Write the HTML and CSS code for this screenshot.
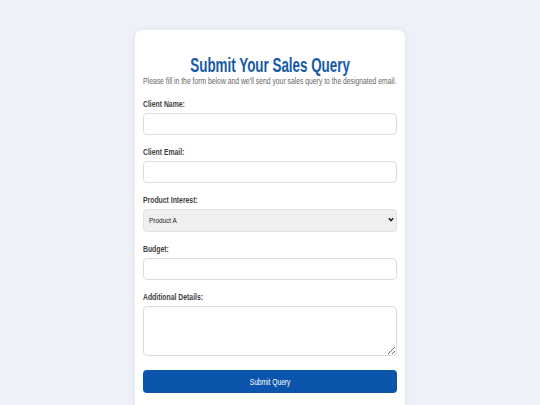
FILE: index.html
```html
<!DOCTYPE html>
<html>
<head>
<meta charset="utf-8">
<link rel="stylesheet" href="styles.css">
</head>
<body>
<div class="card">
  <h1 class="title"><span class="title-text">Submit Your Sales Query</span></h1>
  <p class="subtitle"><span class="subtitle-text">Please fill in the form below and we'll send your sales query to the designated email.</span></p>
  <form class="form">
    <label class="label" for="name"><span class="label-text">Client Name:</span></label>
    <input class="field" id="name" type="text">
    <label class="label" for="email"><span class="label-text">Client Email:</span></label>
    <input class="field" id="email" type="email">
    <label class="label" for="product"><span class="label-text">Product Interest:</span></label>
    <div class="select-wrap">
      <select class="field select" id="product"><option>Product A</option><option>Product B</option><option>Product C</option></select>
      <svg class="chevron" width="6" height="5" viewBox="0 0 6 5"><path d="M0.8 1.2 L3 3.6 L5.2 1.2" fill="none" stroke="#222" stroke-width="1.6"/></svg>
    </div>
    <label class="label" for="budget"><span class="label-text">Budget:</span></label>
    <input class="field" id="budget" type="text">
    <label class="label" for="details"><span class="label-text">Additional Details:</span></label>
    <textarea class="field area" id="details"></textarea>
    <button class="btn" type="button"><span class="btn-text">Submit Query</span></button>
  </form>
</div>
</body>
</html>
```
FILE: styles.css
```css
html, body { margin: 0; padding: 0; }
body {
  background: #eef1f8;
  font-family: "Liberation Sans", Arial, sans-serif;
  color: #333;
  height: 405px;
  overflow: hidden;
}
.card {
  width: 254px;
  margin: 30px auto 0;
  background: #fff;
  border-radius: 7px;
  box-shadow: 0 0 6px rgba(0, 0, 0, 0.07);
  padding: 24px 8px 20px;
}
.title {
  margin: 0;
  display: flex;
  justify-content: center;
  font-size: 20px;
  line-height: 22px;
  color: #1559a8;
  white-space: nowrap;
}
.title-text {
  display: inline-block;
  transform: scaleX(0.67);
}
.subtitle {
  margin: 0;
  display: flex;
  justify-content: center;
  font-size: 9px;
  line-height: 10px;
  color: #666;
  white-space: nowrap;
}
.subtitle-text {
  display: inline-block;
  transform: scaleX(0.755);
}
.form {
  display: flex;
  flex-direction: column;
  margin-top: 12px;
}
.label {
  font-weight: bold;
  font-size: 9.5px;
  line-height: 12px;
  color: #3d3d3d;
  margin-bottom: 3px;
  white-space: nowrap;
}
.label-text {
  display: inline-block;
  transform: scaleX(0.72);
  transform-origin: left center;
}
.field {
  box-sizing: border-box;
  display: block;
  width: 100%;
  height: 22px;
  margin: 0 0 11px;
  border: 1px solid #dcdcdc;
  border-radius: 4px;
  background: #fff;
  font-family: inherit;
}
.select-wrap {
  position: relative;
}
.select {
  -webkit-appearance: none;
  appearance: none;
  height: 23px;
  padding: 0 5px;
  background: #efefef;
  border-color: #e2e2e2;
  font-size: 6.4px;
  color: #222;
}
.chevron {
  position: absolute;
  right: 3px;
  top: 8px;
  pointer-events: none;
}
.area {
  height: 50px;
  resize: vertical;
  margin-bottom: 14px;
}
.btn {
  height: 23px;
  border: none;
  border-radius: 4px;
  background: #0b55ad;
  color: #fff;
  font-family: inherit;
  font-size: 9.5px;
  white-space: nowrap;
}
.btn-text {
  display: inline-block;
  transform: scaleX(0.7);
}
```
